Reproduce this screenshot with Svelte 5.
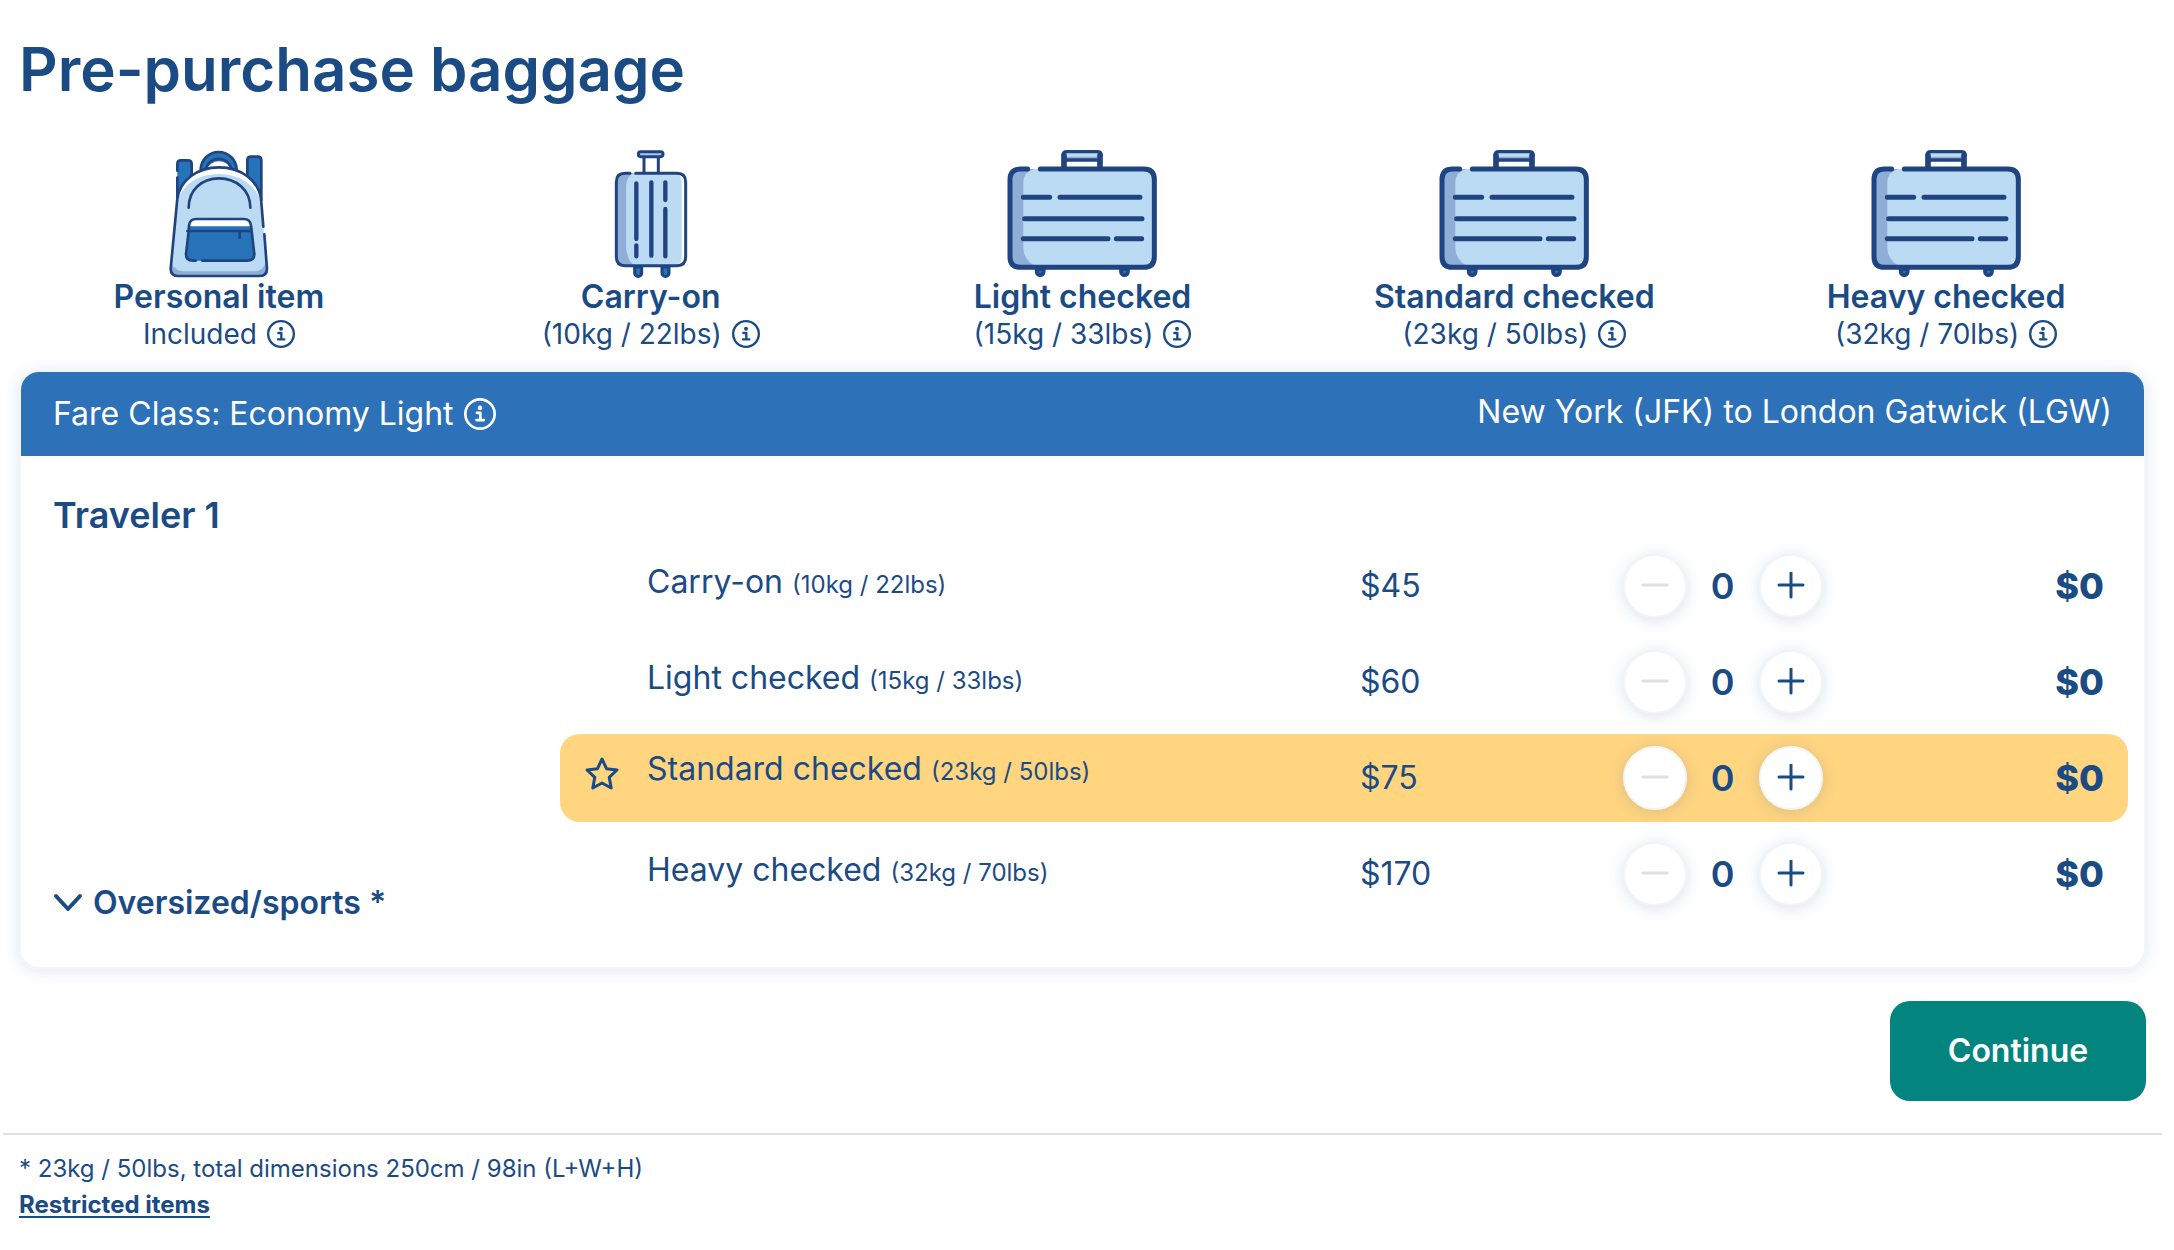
<script lang="ts">
type Bag = {
	name: string;
	size: string;
	price: number;
	icon: "carry" | "case";
	recommended?: boolean;
};

const bags: Bag[] = [
	{ name: "Carry-on", size: "(10kg / 22lbs)", price: 45, icon: "carry" },
	{ name: "Light checked", size: "(15kg / 33lbs)", price: 60, icon: "case" },
	{ name: "Standard checked", size: "(23kg / 50lbs)", price: 75, icon: "case", recommended: true },
	{ name: "Heavy checked", size: "(32kg / 70lbs)", price: 170, icon: "case" },
];

const allowances = [
	{ name: "Personal item", size: "Included", icon: "backpack" },
	...bags,
];

let counts = $state(bags.map(() => 0));
</script>

{#snippet info(label: string)}
	<button class="info" aria-label={`More about ${label}`}>
		<svg viewBox="0 0 84 84" fill="none" stroke="currentColor">
			<circle cx="42" cy="42" r="38.5" stroke-width="7" />
			<circle cx="42" cy="26" r="6" fill="currentColor" stroke="none" />
			<path d="M34 39h9v19M33 58h19" stroke-width="7" stroke-linecap="round" stroke-linejoin="round" />
		</svg>
	</button>
{/snippet}

{#snippet backpack()}
	<svg class="bag" width="100" height="128" viewBox="207 60 300 384" fill="none" stroke="#1f4480" stroke-width="8" stroke-linecap="round" stroke-linejoin="round">
		<path d="M232 210V102q0-12 12-12h20q12 0 12 12v45z" fill="#2773ba" stroke="none" />
		<path d="M484 210V92q0-12-12-12h-18q-12 0-12 12v55z" fill="#2773ba" stroke="none" />
		<path d="M232 122V102q0-11 11-11h21q11 0 11 11v33M232 143v60" />
		<path d="M484 210V91q0-11-11-11h-20q-11 0-11 11v42" />
		<path d="M302 122a54 54 0 0 1 108 0l-16-2a38 34 0 0 0-74 0z" fill="#2773ba" stroke="none" />
		<path d="M302 120a54 54 0 0 1 108 0M319 113a38 34 0 0 1 74 0" />
		<path d="M233 206C240 152 290 112 357 112s118 40 126 94l18 210q0 22-24 22H236q-24 0-24-22z" fill="#bbdbf4" stroke="none" />
		<path d="M234 206C244 154 292 115 357 115s115 39 123 91C460 160 415 132 357 132S256 158 234 206z" fill="#fff" stroke="none" />
		<path d="M214 396q10 28 38 28h210q28 0 36-28l3 20q0 22-24 22H236q-24 0-24-22z" fill="#8faed6" stroke="none" />
		<path d="M490 290l-7-84C475 152 424 112 357 112S240 152 232 206l-20 210q0 22 24 22h241q24 0 24-22l-8-103" />
		<path d="M266 233c0-52 38-88 91-88s94 36 94 88" />
		<path d="M266 303l-8 70q0 19 22 19h160q24 0 23-19l-9-70z" fill="#2773ba" stroke="none" />
		<path d="M267 290q0-23 22-23h140q24 0 24 23z" fill="#fff" stroke="none" />
		<path d="M267 289h186v14H266z" fill="#2773ba" stroke="none" />
		<path d="M287 392h-9q-20 0-20-19l8-70 1-16q2-20 22-20h142q20 0 22 20l2 16 8 70q0 19-22 19H307M262 303h191M419 306v17" />
	</svg>
{/snippet}

{#snippet carry()}
	<svg class="bag" width="74" height="128" viewBox="281 60 222 384" fill="none" stroke="#1f4480" stroke-width="9" stroke-linecap="round" stroke-linejoin="round">
		<path d="M343 411v18a10 10 0 0 0 21 0v-18zM425 411v18a10 10 0 0 0 21 0v-18z" fill="#2773ba" />
		<path d="M371 84v44M414 84v44" />
		<rect x="354" y="65" width="74" height="15" rx="7" fill="#a9c9ea" />
		<rect x="288" y="130" width="208" height="277" rx="26" fill="#fff" stroke="none" />
		<path d="M318 130h140q26 0 26 26v225q0 26-26 26H318z" fill="#bbdbf4" stroke="none" />
		<path d="M345 407h-31q-26 0-26-26V156q0-26 26-26h28q-24 6-24 38v184q2 44 27 55z" fill="#8faed6" stroke="none" />
		<path d="M329 130h-15q-26 0-26 26v225q0 26 26 26h156q26 0 26-26V156q0-26-26-26H346" />
		<path d="M348 160v167M348 346v33M393 157v220M435 157v53M435 237v142" stroke-width="13" />
	</svg>
{/snippet}

{#snippet suitcase()}
	<svg class="bag" width="150" height="128" viewBox="171 60 450 384" fill="none" stroke="#1f4480" stroke-width="15" stroke-linecap="round" stroke-linejoin="round">
		<path d="M260 417v8a10 10 0 0 0 21 0v-8zM513 417v8a10 10 0 0 0 21 0v-8z" fill="#2773ba" stroke-width="11" />
		<path d="M345 68h104v18H345z" fill="#bbdbf4" stroke="none" />
		<path d="M345 80h104v6H345z" fill="#8faed6" stroke="none" />
		<path d="M342 114V77M450 114V77" stroke-width="17" />
		<path d="M339 76q0-11 12-11h90q13 0 13 11M350 90h94" stroke-width="10" />
		<rect x="180" y="117" width="434" height="296" rx="30" fill="#bbdbf4" stroke="none" />
		<path d="M266 413h-56q-30 0-30-30V147q0-30 30-30h46q-36 6-36 42v192q0 44 46 62z" fill="#8faed6" stroke="none" />
		<path d="M233 117h-21q-32 0-32 32v231q0 32 32 32h369q32 0 32-32V149q0-32-32-32H271" />
		<path d="M220 202h79M330 202h240M224 266h352M220 326h254M499 326h76" />
	</svg>
{/snippet}

<main>
	<h1>Pre-purchase baggage</h1>

	<ul class="allowances">
		{#each allowances as item}
			<li>
				{#if item.icon === "backpack"}
					{@render backpack()}
				{:else if item.icon === "carry"}
					{@render carry()}
				{:else}
					{@render suitcase()}
				{/if}
				<strong>{item.name}</strong>
				<div class="allowance-size">
					<span>{item.size}</span>
					{@render info(item.name)}
				</div>
			</li>
		{/each}
	</ul>

	<section class="card">
		<header>
			<div class="fare">
				<span>Fare Class: Economy Light</span>
				{@render info("Economy Light")}
			</div>
			<div class="route">New York (JFK) to London Gatwick (LGW)</div>
		</header>

		<div class="body">
			<div class="traveler">
				<h2>Traveler 1</h2>
				<button class="oversized">
					<svg width="30" height="20" viewBox="0 0 30 20" fill="none" stroke="currentColor" stroke-width="4" stroke-linecap="round" stroke-linejoin="round">
						<path d="M3 3l12 13L27 3" />
					</svg>
					Oversized/sports *
				</button>
			</div>

			<ul class="options">
				{#each bags as bag, i}
					<li class:recommended={bag.recommended}>
						<span class="star">
							{#if bag.recommended}
								<svg width="36" height="36" viewBox="0 0 36 36" fill="none" stroke="currentColor" stroke-width="3" stroke-linejoin="round">
									<path d="M18 3l4.5 9.7L33 14l-7.800 7.300 2 10.700-9.200-5-9.200 5 2-10.700L3 14l10.500-1.300z" />
								</svg>
							{/if}
						</span>
						<span class="name">{bag.name} <small>{bag.size}</small></span>
						<span class="price">${bag.price}</span>
						<div class="stepper">
							<button aria-label={`Remove ${bag.name}`} disabled={counts[i] === 0} onclick={() => counts[i]--}>
								<svg viewBox="0 0 28 28" stroke="currentColor" stroke-width="3" stroke-linecap="round">
									<path d="M2 13h24" />
								</svg>
							</button>
							<output>{counts[i]}</output>
							<button aria-label={`Add ${bag.name}`} onclick={() => counts[i]++}>
								<svg viewBox="0 0 28 28" stroke="currentColor" stroke-width="3" stroke-linecap="round">
									<path d="M2 13h24M14 1v24" />
								</svg>
							</button>
						</div>
						<span class="total">${counts[i] * bag.price}</span>
					</li>
				{/each}
			</ul>
		</div>
	</section>

	<div class="actions">
		<button class="continue">Continue</button>
	</div>

	<footer>
		<p>* 23kg / 50lbs, total dimensions 250cm / 98in (L+W+H)</p>
		<a href="#restricted">Restricted items</a>
	</footer>
</main>

<style>
:global(body) {
	margin: 0;
	background: #fff;
}

main {
	--navy: #1b4b84;
	--blue: #2d72b9;
	margin: 0 12px 0 3px;
	padding-top: 33px;
	color: var(--navy);
	font-family: Inter, "Liberation Sans", sans-serif;
	font-size: 32px;
	line-height: 40px;
}

button {
	padding: 0;
	border: none;
	background: none;
	color: inherit;
	font: inherit;
	cursor: pointer;
}

svg {
	display: block;
}

ul {
	margin: 0;
	padding: 0;
	list-style: none;
}

h1 {
	margin: 0 16px;
	font-size: 60px;
	font-weight: 600;
	line-height: 72px;
}

.allowances {
	display: grid;
	grid-template-columns: repeat(5, 1fr);
	margin-top: 45px;

	& li {
		display: flex;
		flex-direction: column;
		align-items: center;
	}

	& strong {
		font-weight: 600;
		line-height: 38px;
	}
}

.allowance-size {
	display: flex;
	align-items: center;
	gap: 10px;
	font-size: 28px;
	line-height: 36px;
}

.info svg {
	width: 28px;
	height: 28px;
}

.card {
	margin: 18px 16px 0;
	border: 2px solid #f3f4f6;
	border-radius: 20px;
	box-shadow: 0 2px 16px rgba(27, 75, 132, .14);
}

header {
	display: flex;
	justify-content: space-between;
	align-items: center;
	height: 84px;
	padding: 0 32px;
	border-radius: 18px 18px 0 0;
	background: var(--blue);
	color: #fff;
}

.fare {
	display: flex;
	align-items: center;
	gap: 10px;

	& svg {
		width: 32px;
		height: 32px;
	}
}

.route {
	padding-bottom: 4px;
}

.body {
	display: grid;
	grid-template-columns: 507fr 1568fr;
	padding: 37px 16px 44px 32px;
}

.traveler {
	display: flex;
	flex-direction: column;
	justify-content: space-between;
	align-items: flex-start;
}

h2 {
	margin: 0;
	font-size: 36px;
	font-weight: 600;
	line-height: 44px;
}

.oversized {
	display: flex;
	align-items: center;
	gap: 10px;
	font-weight: 600;
}

.options {
	display: flex;
	flex-direction: column;
	gap: 8px;
	padding: 49px 0 5px;

	& li {
		display: grid;
		grid-template-columns: 87px 114fr 42fr 200px 45fr;
		align-items: center;
		height: 88px;
		padding-right: 24px;
		border-radius: 20px;
	}

	& .recommended {
		background: #ffd580;
	}
}

.star {
	padding: 0 0 8px 24px;
}

.name {
	padding-bottom: 6px;

	& small {
		font-size: 24px;
	}

	.recommended & {
		padding-bottom: 16px;
	}
}

.stepper {
	display: flex;
	justify-content: space-between;
	align-items: center;

	& button {
		display: grid;
		place-items: center;
		width: 64px;
		height: 64px;
		border: 2px solid #f3f4f6;
		border-radius: 50%;
		background: #fff;
		box-shadow: 0 2px 16px rgba(27, 75, 132, .16);
	}

	& button:disabled {
		color: #e0e0e0;
		cursor: default;
	}

	& svg {
		width: 28px;
		height: 28px;
	}

	& output {
		font-size: 36px;
		font-weight: 600;
	}
}

.total {
	font-size: 36px;
	font-weight: 800;
	text-align: right;
}

.actions {
	display: flex;
	justify-content: flex-end;
	padding: 32px 16px;
}

.continue {
	width: 256px;
	height: 100px;
	border-radius: 20px;
	background: #03847f;
	color: #fff;
	font-weight: 600;
}

footer {
	padding: 16px;
	border-top: 2px solid #e0e0e0;
	font-size: 24px;
	line-height: 36px;

	& p {
		margin: 0;
	}

	& a {
		color: inherit;
		font-weight: 700;
		text-underline-offset: 3px;
		text-decoration-thickness: 2px;
	}
}
</style>
